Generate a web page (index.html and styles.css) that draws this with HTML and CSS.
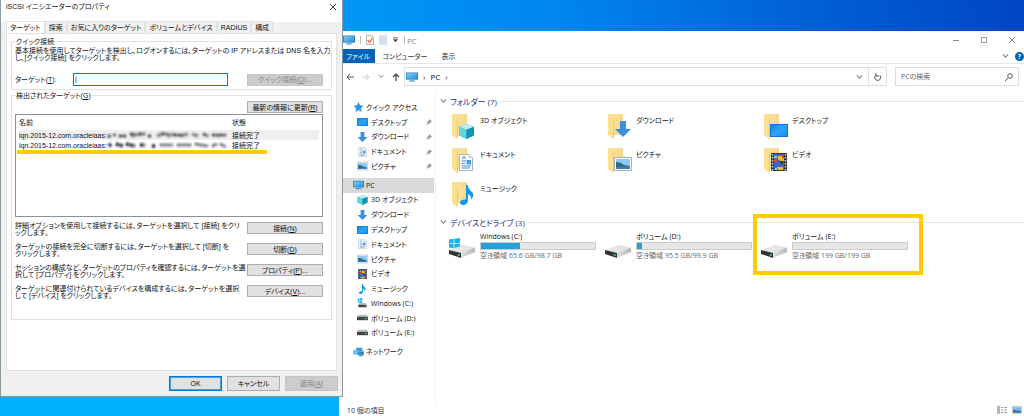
FILE: index.html
```html
<!DOCTYPE html>
<html lang="ja">
<head>
<meta charset="utf-8">
<title>iSCSI イニシエーターのプロパティ</title>
<link rel="stylesheet" href="styles.css">
</head>
<body>
<svg class="defs" aria-hidden="true">
  <defs>
    <linearGradient id="gFold" x1="0" x2="1"><stop offset="0" stop-color="#fbe3a0"/><stop offset="1" stop-color="#f8d98c"/></linearGradient>
    <linearGradient id="gBlue" x1="0" y1="0" x2="1" y2="1"><stop offset="0" stop-color="#1585e0"/><stop offset=".5" stop-color="#2ba6fb"/><stop offset="1" stop-color="#1590ef"/></linearGradient>
    <linearGradient id="gDrive" x1="0" x2="1"><stop offset="0" stop-color="#e0e0e0"/><stop offset="1" stop-color="#b5b5b5"/></linearGradient>
    <linearGradient id="gScreen" x1="0" y1="0" x2="1" y2="1"><stop offset="0" stop-color="#7fd0fb"/><stop offset="1" stop-color="#1e8fe0"/></linearGradient>
  </defs>
  <symbol id="folder" viewBox="0 0 24 26"><path d="M1 1H16V22H6Z" fill="url(#gFold)"/><path d="M1 1L7 5V23L6 26L1 22Z" fill="#fde08f"/><path d="M6.500 5L7 5V23L6 26Z" fill="#eebf5c"/></symbol>
  <symbol id="cube" viewBox="0 0 16 16"><path d="M8 0L16 3V12L8 16L0 12V3Z" fill="#27b5cc"/><path d="M8 0L16 3L8 6L0 3Z" fill="#bdf0f3"/><path d="M0 3L8 6V16L0 12Z" fill="#62d3df"/><path d="M8 6L16 3V12L8 16Z" fill="#0f95b3"/></symbol>
  <symbol id="down" viewBox="0 0 16 16"><path d="M5 0H11V8H16L8 16L0 8H5Z" fill="#3b8ee0"/></symbol>
  <symbol id="desk" viewBox="0 0 18 13"><path d="M0 0H18V13H0Z" fill="#0c78d4"/><path d="M1 1H17V12H1Z" fill="url(#gBlue)"/></symbol>
  <symbol id="doc" viewBox="0 0 14 17"><path d="M.5.5H10L13.500 4V16.500H.5Z" fill="#fff" stroke="#a5b4c2"/><path d="M10 0V4H14" fill="#dbe5ed" stroke="#a5b4c2" stroke-width=".6"/><path d="M3 5L5 2L7 5M2.500 7H7M2.500 9.500H6M2.500 12H12M2.500 14H11" stroke="#4489c9" fill="none"/><path d="M7.500 6H12V10.500H7.500Z" fill="#4b9be0"/></symbol>
  <symbol id="pic" viewBox="0 0 18 14"><path d="M.5.5H17.500V13.500H.5Z" fill="#fff" stroke="#aaa"/><path d="M2 2H16V12H2Z" fill="#8fc8f4"/><path d="M2 5Q7 5 10 8L16 9V12H2Z" fill="#2c6a7a"/><path d="M2 10L16 9V12H2Z" fill="#3580bd"/></symbol>
  <symbol id="film" viewBox="0 0 16 18"><path d="M0 0H16V18H0Z" fill="#333"/><path d="M3 1H13V17H3Z" fill="#3867cf"/><path d="M1.500 1V18M14.500 1V18" stroke="#ddd" stroke-width="1.500" stroke-dasharray="1.500 1.500"/><path d="M3 6H6V9H3ZM8 2H12V5H8Z" fill="#e2453a"/><path d="M7 3H11V5H13V8H9V7H7Z" fill="#edb91b"/><path d="M6 14H12V17H7Z" fill="#efbd24"/><path d="M9 8H12V11H10Z" fill="#263927"/><path d="M3 3H6V5H3ZM4 15H6V17H4Z" fill="#7fd1dc"/></symbol>
  <symbol id="note" viewBox="0 0 14 20"><path d="M6 0H8Q8 4 12 7Q15 10 11 15Q12 11 8 9V16Q7 20 3 20Q0 20 0 17Q1 14 6 14.500Z" fill="#1596ed"/></symbol>
  <symbol id="pc" viewBox="0 0 16 13"><path d="M0 .5H16V10H0Z" fill="#2f78ae"/><path d="M1 1.500H15V9H1Z" fill="url(#gScreen)"/><path d="M7 10H9V11H12V12.500H4V11H7Z" fill="#4d91bd"/></symbol>
  <symbol id="drive" viewBox="0 0 26 13"><path d="M0 5L14 0L26 2.500L12 8Z" fill="#e4e4e4"/><path d="M12 8L26 2.500V7L12 13Z" fill="url(#gDrive)"/><path d="M0 5L12 8V13L0 9Z" fill="#303433"/><path d="M8.500 9L11 9.600V11L8.500 10.400Z" fill="#35cc4c"/></symbol>
  <symbol id="win" viewBox="0 0 11 11"><path d="M0 1.500L4.700 .8V5.200H0ZM5.400 .7L11 0V5.200H5.400ZM0 5.900H4.700V10.300L0 9.600ZM5.400 5.900H11V11L5.400 10.400Z" fill="#12b5ed"/></symbol>
  <symbol id="mini" viewBox="0 0 10 6"><path d="M1 0H9L10 2H0Z" fill="#bbb"/><path d="M0 2H10V5H0Z" fill="#444"/><path d="M7 3H9V4H7Z" fill="#45d058"/></symbol>
  <symbol id="star" viewBox="0 0 12 12"><path d="M6 0L7.800 4L12 4.500L9 7.500L9.700 12L6 9.700L2.300 12L3 7.500L0 4.500L4.200 4Z" fill="#2f93df"/></symbol>
  <symbol id="net" viewBox="0 0 14 13"><path d="M4 1H12V7H4Z" fill="#3b9bdd"/><path d="M0 4H8V10H0Z" fill="#6bbef0"/><circle cx="10" cy="8" r="4" fill="#2a82c4"/><path d="M7 7Q9 4 13 6M7 10Q10 9 12 11" stroke="#9cdcf5" fill="none"/></symbol>
  <symbol id="pin" viewBox="0 0 8 8"><path d="M4.500 0L8 3.500L7 4L6.500 4L5 5.500V7L3.700 6L0 8L2.200 4.500L1 3.200H2.700L4.200 1.500Z" fill="#8c9aa4"/></symbol>
  <symbol id="chev" viewBox="0 0 8 6"><path d="M1 1L4 4.500L7 1" fill="none" stroke="currentColor" stroke-width="1.200"/></symbol>
</svg>

<main class="desktop">
  <section class="explorer" aria-label="PC">
    <header class="ex-title">
      <svg class="i-pc"><use href="#pc"/></svg><span class="bar"></span>
      <svg class="i-qa" viewBox="0 0 10 12"><path d="M.5.5H7L9.500 3V11.500H.5Z" fill="#fff" stroke="#9a9a9a"/><path d="M2 6L4.500 9L8 3" fill="none" stroke="#e56b32" stroke-width="1.500"/></svg>
      <svg class="i-qa" viewBox="0 0 10 12"><path d="M0 0H10V12H0Z" fill="#d5e0ee"/></svg>
      <svg class="i-chev" viewBox="0 0 8 6"><path d="M1 0H7V1H1ZM1 2H7L4 5.500Z" fill="#444"/></svg>
      <span class="bar"></span><span class="ex-name">PC</span>
      <span class="caption">
        <button aria-label="最小化"><svg viewBox="0 0 8 8"><path d="M1 4.500H7" stroke="#888"/></svg></button>
        <button aria-label="最大化"><svg viewBox="0 0 8 8"><path d="M1.500 1.500H6.500V6.500H1.500Z" fill="none" stroke="#999"/></svg></button>
        <button aria-label="閉じる"><svg viewBox="0 0 8 8"><path d="M1 1L7 7M7 1L1 7" stroke="#888"/></svg></button>
      </span>
    </header>
    <nav class="ribbon">
      <button class="file">ファイル</button><button>コンピューター</button><button>表示</button>
      <span class="help"><svg class="i-chev"><use href="#chev"/></svg><button aria-label="ヘルプ">?</button></span>
    </nav>
    <div class="address">
      <svg class="i-arr" viewBox="0 0 8 8"><path d="M8 4H1M4 1L1 4L4 7" fill="none" stroke="#555"/></svg>
      <svg class="i-arr" viewBox="0 0 8 8"><path d="M0 4H7M4 1L7 4L4 7" fill="none" stroke="#ccc"/></svg>
      <svg class="i-sm"><use href="#chev"/></svg>
      <svg class="i-arr" viewBox="0 0 8 8"><path d="M4 8V1M1 4L4 1L7 4" fill="none" stroke="#444" stroke-width="1.200"/></svg>
      <div class="path"><svg class="i-pc"><use href="#pc"/></svg><span>›</span><span>PC</span><span>›</span>
        <svg class="i-chev end"><use href="#chev"/></svg>
        <button class="reload" aria-label="更新"><svg viewBox="0 0 8 8"><path d="M2 2A3 3 0 1 0 6 2.500M2 0V3H5" fill="none" stroke="#555"/></svg></button>
      </div>
      <label class="search"><input type="text" placeholder="PCの検索" aria-label="PCの検索"><svg viewBox="0 0 8 8"><circle cx="5" cy="3" r="2.300" fill="none" stroke="#555"/><path d="M3.500 4.500L0 8" stroke="#555"/></svg></label>
    </div>
    <div class="ex-body">
      <nav class="tree">
        <ul class="g5">
          <li class="root"><svg><use href="#star"/></svg>クイック アクセス</li>
          <li><svg><use href="#desk"/></svg>デスクトップ<svg class="pin"><use href="#pin"/></svg></li>
          <li><svg><use href="#down"/></svg>ダウンロード<svg class="pin"><use href="#pin"/></svg></li>
          <li><svg><use href="#doc"/></svg>ドキュメント<svg class="pin"><use href="#pin"/></svg></li>
          <li><svg><use href="#pic"/></svg>ピクチャ<svg class="pin"><use href="#pin"/></svg></li>
        </ul>
        <ul class="g11">
          <li class="root on"><svg><use href="#pc"/></svg>PC</li>
          <li><svg><use href="#cube"/></svg>3D オブジェクト</li>
          <li><svg><use href="#down"/></svg>ダウンロード</li>
          <li><svg><use href="#desk"/></svg>デスクトップ</li>
          <li><svg><use href="#doc"/></svg>ドキュメント</li>
          <li><svg><use href="#pic"/></svg>ピクチャ</li>
          <li><svg><use href="#film"/></svg>ビデオ</li>
          <li><svg><use href="#note"/></svg>ミュージック</li>
          <li><svg viewBox="0 0 10 10"><use href="#win" width="5" height="5"/><use href="#mini" y="5" width="10" height="5"/></svg>Windows (C:)</li>
          <li><svg><use href="#mini"/></svg>ボリューム (D:)</li>
          <li><svg><use href="#mini"/></svg>ボリューム (E:)</li>
        </ul>
        <ul class="g1"><li class="root"><svg><use href="#net"/></svg>ネットワーク</li></ul>
      </nav>
      <div class="content">
        <h2><svg class="i-chev"><use href="#chev"/></svg>フォルダー (7)</h2>
        <div class="tiles">
          <div class="tile"><svg viewBox="0 0 26 26"><use href="#folder" width="24" height="26"/><use href="#cube" x="8" y="11" width="15" height="15"/></svg>3D オブジェクト</div>
          <div class="tile"><svg viewBox="0 0 26 26"><use href="#folder" width="24" height="26"/><use href="#down" x="8" y="8" width="16" height="16"/></svg>ダウンロード</div>
          <div class="tile"><svg viewBox="0 0 26 26"><use href="#folder" width="24" height="26"/><use href="#desk" x="7" y="11" width="18" height="13"/></svg>デスクトップ</div>
          <div class="tile"><svg viewBox="0 0 26 26"><use href="#folder" width="24" height="26"/><use href="#doc" x="8" y="7" width="14" height="17"/></svg>ドキュメント</div>
          <div class="tile"><svg viewBox="0 0 26 26"><use href="#folder" width="24" height="26"/><use href="#pic" x="7" y="10" width="18" height="14"/></svg>ピクチャ</div>
          <div class="tile"><svg viewBox="0 0 26 26"><use href="#folder" width="24" height="26"/><use href="#film" x="8" y="6" width="16" height="18"/></svg>ビデオ</div>
          <div class="tile"><svg viewBox="0 0 26 26"><use href="#folder" width="24" height="26"/><use href="#note" x="9" y="4" width="14" height="20"/></svg>ミュージック</div>
        </div>
        <h2><svg class="i-chev"><use href="#chev"/></svg>デバイスとドライブ (3)</h2>
        <div class="tiles drives">
          <div class="drive"><svg viewBox="0 0 26 28"><use href="#win" y="4" width="11" height="11"/><use href="#drive" y="11" width="26" height="13"/></svg><div><p>Windows (C:)</p><div class="meter"><i style="width:34%"></i></div><p class="sub">空き領域 65.6 GB/98.7 GB</p></div></div>
          <div class="drive"><svg viewBox="0 0 26 28"><use href="#drive" y="11" width="26" height="13"/></svg><div><p>ボリューム (D:)</p><div class="meter"><i style="width:4%"></i></div><p class="sub">空き領域 95.5 GB/99.9 GB</p></div></div>
          <div class="drive marked"><svg viewBox="0 0 26 28"><use href="#drive" y="11" width="26" height="13"/></svg><div><p>ボリューム (E:)</p><div class="meter"></div><p class="sub">空き領域 199 GB/199 GB</p></div></div>
        </div>
      </div>
    </div>
    <footer class="status"><span>10 個の項目</span>
      <svg viewBox="0 0 10 8"><path d="M0 0H3V8H0Z" fill="#aab7c4"/><path d="M4 1.500H6M7 1.500H10M4 4H6M7 4H10M4 6.500H6M7 6.500H10" stroke="#999"/></svg>
      <svg viewBox="0 0 10 8"><path d="M0 0H10V8H0Z" fill="#c9c9c9"/><path d="M1 1.500H9V6.500H1Z" fill="#73b9ef"/><path d="M1 4L9 5V6.500H1Z" fill="#316f80"/></svg>
    </footer>
  </section>

  <section class="dialog" role="dialog" aria-label="iSCSI イニシエーターのプロパティ">
    <header class="dl-title"><h1>iSCSI イニシエーターのプロパティ</h1><button aria-label="閉じる"><svg viewBox="0 0 8 8"><path d="M1 1L7 7M7 1L1 7" stroke="#444"/></svg></button></header>
    <div class="tabs" role="tablist"><button class="on" role="tab">ターゲット</button><button role="tab">探索</button><button role="tab">お気に入りのターゲット</button><button role="tab">ボリュームとデバイス</button><button role="tab">RADIUS</button><button role="tab">構成</button></div>
    <div class="pane">
      <fieldset class="quick"><legend>クイック接続</legend>
        <p>基本接続を使用してターゲットを検出し、ログオンするには、ターゲットの IP アドレスまたは DNS 名を入力<br>し、[クイック接続] をクリックします。</p>
        <div class="field"><label for="target">ターゲット(<u>T</u>):</label><input id="target" type="text" value="|"><button class="btn" disabled>クイック接続(<u>Q</u>)...</button></div>
      </fieldset>
      <fieldset class="found"><legend>検出されたターゲット(<u>G</u>)</legend>
        <button class="btn refresh">最新の情報に更新(<u>R</u>)</button>
        <div class="list">
          <table>
            <thead><tr><th class="c1">名前</th><th>状態</th></tr></thead>
            <tbody>
              <tr class="sel"><td><div class="iqn">iqn.2015-12.com.oracleiaas:<svg viewBox="0 0 122 8" preserveAspectRatio="none"><path d="M1 6L4 4M7 5L8 3M12 5H20M23 3H28M32 3H38M41 5H45M55 3H61M67 4H76M96 3L101 5M105 4H119" stroke="#222" stroke-width="2.500" stroke-dasharray="3 1"/><path d="M24 5L33 3M50 5L57 2M60 5L67 3M73 5L81 3M85 3L91 5M111 3V6" stroke="#555" stroke-width="3" opacity=".7"/></svg></div></td><td>接続完了</td></tr>
              <tr><td><div class="iqn">iqn.2015-12.com.oracleiaas:<svg viewBox="0 0 122 8" preserveAspectRatio="none"><path d="M2 5L4 3M9 3L16 5M19 3L28 5M33 4H38M45 5H49" stroke="#111" stroke-width="3.500" stroke-dasharray="3 1"/><path d="M53 4H66M70 4H84M88 3L101 5M105 5L110 3M113 3L119 6" stroke="#444" stroke-width="3" stroke-dasharray="2 1"/></svg></div></td><td>接続完了</td></tr>
            </tbody>
          </table>
        </div>
        <div class="act"><p>詳細オプションを使用して接続するには、ターゲットを選択して [接続] をクリ<br>ックします。</p><button class="btn">接続(<u>N</u>)</button></div>
        <div class="act"><p>ターゲットの接続を完全に切断するには、ターゲットを選択して [切断] を<br>クリックします。</p><button class="btn">切断(<u>D</u>)</button></div>
        <div class="act"><p>セッションの構成など、ターゲットのプロパティを確認するには、ターゲットを選<br>択して [プロパティ] をクリックします。</p><button class="btn">プロパティ(<u>P</u>)...</button></div>
        <div class="act"><p>ターゲットに関連付けられているデバイスを構成するには、ターゲットを選択<br>して [デバイス] をクリックします。</p><button class="btn">デバイス(<u>V</u>)...</button></div>
      </fieldset>
    </div>
    <footer class="dl-foot"><button class="btn ok">OK</button><button class="btn">キャンセル</button><button class="btn" disabled>適用(<u>A</u>)</button></footer>
  </section>
</main>
</body>
</html>
```
FILE: styles.css
```css
* { box-sizing: border-box; }
html, body { height: 100%; }
body, h1, h2, p, ul, fieldset { margin: 0; padding: 0; }
body {
  font: 7px/9px "Open Sans", "Noto Sans CJK JP", sans-serif;
  font-feature-settings: "palt";
  color: #111;
}
button, input { font: inherit; font-feature-settings: inherit; color: inherit; padding: 0; margin: 0; }
button { border: 0; background: none; white-space: nowrap; }
ul { list-style: none; }
svg { display: block; flex: none; }
.defs { position: absolute; width: 0; height: 0; }

.desktop {
  position: relative;
  height: 100vh;
  overflow: hidden;
  background: linear-gradient(80deg, #00b0fc 0%, #00b0fc 31%, #0098f5 37%, #0086f0 57%, #0062d6 79%, #0046c2 100%);
}

/* Explorer window */
.explorer {
  position: absolute;
  inset: 31px 0 0 339px;
  display: flex;
  flex-direction: column;
  background: #fff;
}
.ex-title { display: flex; align-items: center; gap: 5px; height: 18px; padding-left: 4px; }
.i-pc { width: 12px; height: 10px; }
.i-qa { width: 8px; height: 10px; }
.i-chev { width: 7px; height: 6px; color: #777; }
.i-sm { width: 6px; height: 5px; color: #777; }
.i-arr { width: 8px; height: 8px; }
.bar { width: 1px; height: 8px; background: #bbb; }
.ex-title .bar:nth-of-type(2) { margin-right: -3px; }
.ex-name { color: #888; font-size: 8px; }
.caption { margin-left: auto; display: flex; gap: 20px; padding-right: 8px; }
.caption svg { width: 8px; height: 8px; }
.ribbon { display: flex; height: 15px; border-bottom: 1px solid #e6e6e6; }
.ribbon > button { padding: 0 7px; color: #333; }
.ribbon > .file { background: #0063b8; color: #fff; padding: 0 5px 0 7px; }
.help { margin-left: auto; display: flex; align-items: center; gap: 6px; }
.help button { width: 9px; height: 9px; border-radius: 50%; background: #0063b8; color: #fff; font-weight: 700; }
.address { display: flex; align-items: center; gap: 8px; height: 25px; padding: 0 5px 0 7px; }
.path { flex: 1; display: flex; align-items: center; gap: 5px; height: 19px; border: 1px solid #ddd; padding-left: 1px; margin-left: -4px; font-size: 8px; }
.path .end { margin-left: auto; }
.reload { width: 18px; height: 17px; border-left: 1px solid #ddd; display: grid; place-items: center; }
.reload svg, .search svg { width: 8px; height: 8px; }
.search { display: flex; align-items: center; width: 124px; height: 19px; border: 1px solid #ddd; padding: 0 5px; }
.search input { flex: 1; min-width: 0; border: 0; outline: 0; }
.search input::placeholder { color: #666; opacity: 1; }

.ex-body { flex: 1; min-height: 0; display: flex; }
.tree { width: 97px; display: flex; flex-direction: column; gap: 4px; padding: 11px 1px 45px 3px; border-right: 1px solid #f2f2f2; }
.tree ul { display: flex; flex-direction: column; flex-basis: 0; }
.g5 { flex-grow: 5; }
.g11 { flex-grow: 11; }
.g1 { flex-grow: 1; }
.tree li { flex: 1 1 0; display: flex; align-items: center; gap: 3px; padding-left: 15px; white-space: nowrap; }
.tree li svg { width: 11px; height: 10px; }
.tree .root { padding-left: 11px; gap: 2px; }
.tree .on { background: #d9d9d9; }
.tree li .pin { width: 6px; height: 6px; margin-left: auto; margin-right: 2px; }

.content { flex: 1; min-width: 0; padding: 5px 0 0 4px; }
h2 { display: flex; align-items: center; gap: 3px; height: 14px; font-size: 8px; font-weight: 400; color: #1e3287; }
h2::after { content: ""; flex: 1; height: 1px; background: #e6e6e6; }
.tiles { display: grid; grid-template-columns: repeat(auto-fill, 156px); grid-auto-rows: 34px; padding: 5px 0 0 11px; }
.tile { display: flex; gap: 3px; line-height: 16px; }
.tile svg { width: 26px; height: 26px; }
.drives { padding: 3px 0 0 9px; }
.drive { position: relative; display: flex; gap: 5px; }
.drive > svg { width: 26px; height: 28px; margin-top: 2px; }
.drive > div { width: 116px; }
.meter { height: 8px; margin: 1px 0; background: #e6e6e6; border: 1px solid #ccc; }
.meter i { display: block; height: 100%; background: #26a0da; }
.sub { color: #666; white-space: nowrap; }
.marked::after { content: ""; position: absolute; inset: -18px -6px -9px -8px; border: 4px solid #ffcc05; }

.status { display: flex; align-items: center; gap: 5px; height: 12px; padding: 0 2px 0 8px; color: #334; }
.status span { margin-right: auto; }
.status svg { width: 10px; height: 8px; }

/* iSCSI dialog */
.dialog {
  position: absolute;
  left: 0;
  top: 0;
  width: 343px;
  display: flex;
  flex-direction: column;
  padding: 0 5px;
  background: #f0f0f0;
  border: solid #8a9aa3;
  border-width: 0 1px 1px;
  font-family: "Liberation Sans", "Noto Sans CJK JP", sans-serif;
  line-height: 7px;
}
.dl-title { display: flex; align-items: center; justify-content: space-between; height: 22px; margin: 0 -5px; padding: 0 5px 9px; background: #fff; }
h1 { font-size: 7px; font-weight: 400; }
.dl-title svg { width: 8px; height: 8px; }
.tabs { display: flex; height: 12px; margin-top: -1px; }
.tabs button { background: #f0f0f0; border: 1px solid #e2e2e2; border-bottom: 0; padding: 0 3px; }
.tabs .on { background: #fff; }
.pane { background: #fff; border: 1px solid #e2e2e2; padding: 3px 4px 50px; }
fieldset { border: 1px solid #e0e0e0; min-width: 0; padding: 0 8px 0 3px; }
legend { padding: 0 1px; line-height: 9px; }
p { white-space: nowrap; }
.quick { height: 53px; padding-top: 1px; }
.field { display: flex; align-items: center; margin-top: 12px; }
.field label { width: 58px; }
.field input { width: 155px; height: 13px; border: 1px solid #0078d7; padding-left: 1px; }
.btn { width: 76px; height: 12px; border: 1px solid #adadad; background: #e1e1e1; }
.btn:disabled { background: #ccc; border-color: #c4c4c4; color: #888; }
.field .btn { margin-left: auto; }
.found { padding-bottom: 13px; margin-top: 1px; }
.refresh { display: block; margin: 1px 0 1px auto; }
.list { position: relative; height: 103px; border: 1px solid #8b8f9a; margin-bottom: 5px; padding: 0 3px; }
.list::after { content: ""; position: absolute; left: 1px; top: 35px; width: 250px; height: 4px; background: #ffcc05; }
table { width: 100%; border-collapse: collapse; table-layout: fixed; }
th, td { padding: 0; text-align: left; font-weight: 400; height: 10px; }
th { height: 15px; }
.c1 { width: 213px; }
.sel { background: #efefef; }
.iqn { display: flex; align-items: center; white-space: nowrap; padding-right: 3px; }
.iqn svg { flex: 1; min-width: 0; height: 8px; filter: blur(1px); }
.act { display: flex; justify-content: space-between; margin-bottom: 7px; }
.act p { width: 220px; }
.dl-foot { display: flex; justify-content: flex-end; gap: 5px; padding: 5px 0; margin-right: -1px; }
.dl-foot .btn { width: 53px; height: 15px; }
.dl-foot .ok { border: 1px solid #0078d7; outline: 1px solid #4ca3e4; outline-offset: -2px; }
```
